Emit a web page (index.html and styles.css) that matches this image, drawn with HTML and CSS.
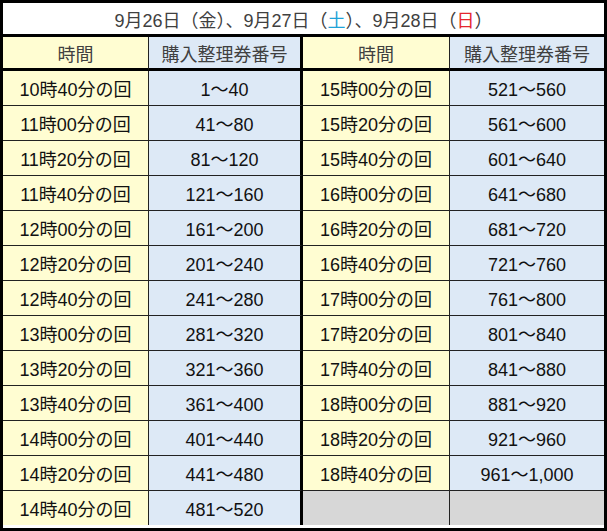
FILE: index.html
```html
<!DOCTYPE html>
<html lang="ja">
<head>
<meta charset="utf-8">
<title>購入整理券番号</title>
<link rel="stylesheet" href="styles.css">
</head>
<body>
<div class="sheet">
  <div class="title">9月26日（金）、9月27日（<span class="sat">土</span>）、9月28日（<span class="sun">日</span>）</div>
  <div class="grid head">
    <div class="cell time">時間</div>
    <div class="cell num mid">購入整理券番号</div>
    <div class="cell time">時間</div>
    <div class="cell num last">購入整理券番号</div>
  </div>
  <div class="grid body">
    <div class="cell time">10時40分の回</div><div class="cell num mid">1～40</div><div class="cell time">15時00分の回</div><div class="cell num last">521～560</div>
    <div class="cell time">11時00分の回</div><div class="cell num mid">41～80</div><div class="cell time">15時20分の回</div><div class="cell num last">561～600</div>
    <div class="cell time">11時20分の回</div><div class="cell num mid">81～120</div><div class="cell time">15時40分の回</div><div class="cell num last">601～640</div>
    <div class="cell time">11時40分の回</div><div class="cell num mid">121～160</div><div class="cell time">16時00分の回</div><div class="cell num last">641～680</div>
    <div class="cell time">12時00分の回</div><div class="cell num mid">161～200</div><div class="cell time">16時20分の回</div><div class="cell num last">681～720</div>
    <div class="cell time">12時20分の回</div><div class="cell num mid">201～240</div><div class="cell time">16時40分の回</div><div class="cell num last">721～760</div>
    <div class="cell time">12時40分の回</div><div class="cell num mid">241～280</div><div class="cell time">17時00分の回</div><div class="cell num last">761～800</div>
    <div class="cell time">13時00分の回</div><div class="cell num mid">281～320</div><div class="cell time">17時20分の回</div><div class="cell num last">801～840</div>
    <div class="cell time">13時20分の回</div><div class="cell num mid">321～360</div><div class="cell time">17時40分の回</div><div class="cell num last">841～880</div>
    <div class="cell time">13時40分の回</div><div class="cell num mid">361～400</div><div class="cell time">18時00分の回</div><div class="cell num last">881～920</div>
    <div class="cell time">14時00分の回</div><div class="cell num mid">401～440</div><div class="cell time">18時20分の回</div><div class="cell num last">921～960</div>
    <div class="cell time">14時20分の回</div><div class="cell num mid">441～480</div><div class="cell time">18時40分の回</div><div class="cell num last">961～1,000</div>
    <div class="cell time end">14時40分の回</div><div class="cell num mid end">481～520</div><div class="cell empty end"></div><div class="cell empty last end"></div>
  </div>
</div>
</body>
</html>
```

FILE: styles.css
```css
html, body {
  margin: 0;
  padding: 0;
  background: #ffffff;
}

.sheet {
  width: 607px;
  height: 531px;
  box-sizing: border-box;
  border: 3px solid #000;
  font-family: "Liberation Sans", "Noto Sans CJK JP", sans-serif;
  font-size: 18px;
  display: flex;
  flex-direction: column;
}

.title {
  height: 34px;
  box-sizing: border-box;
  border-bottom: 3px solid #000;
  background: #fff;
  color: #404040;
  display: flex;
  align-items: center;
  justify-content: center;
  white-space: nowrap;
}

.sat { color: #1fa3d8; }
.sun { color: #e5262e; }

.grid {
  display: grid;
  grid-template-columns: 146px 154px 147px 154px;
}

.head {
  grid-auto-rows: 34px;
  color: #404040;
}

.head .cell {
  border-bottom: 3px solid #000;
}

.body {
  grid-auto-rows: 35px;
  color: #111;
}

.cell {
  box-sizing: border-box;
  display: flex;
  align-items: center;
  justify-content: center;
  white-space: nowrap;
  border-right: 1px solid #222;
  border-bottom: 1px solid #222;
}

.body .end {
  border-bottom: none;
  height: 34px;
}

.cell.mid {
  border-right: 3px solid #000;
}

.cell.last {
  border-right: none;
}

.time { background: #fffdd2; }
.num { background: #dde9f6; }
.empty { background: #d7d7d7; }
```
